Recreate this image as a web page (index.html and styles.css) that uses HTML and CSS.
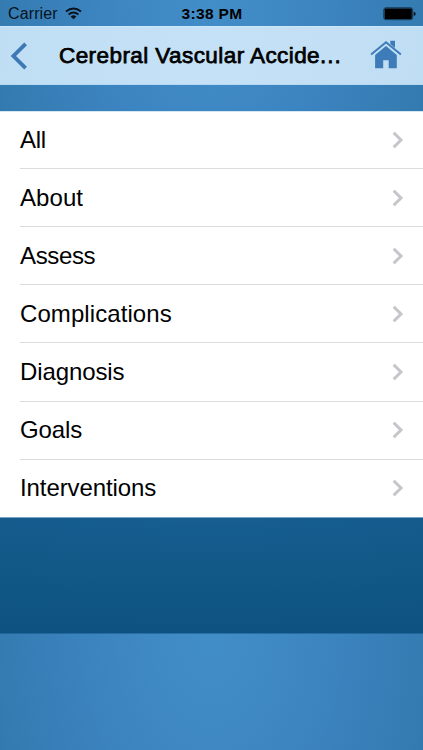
FILE: index.html
```html
<!DOCTYPE html>
<html lang="en">
<head>
<meta charset="utf-8">
<title>Cerebral Vascular Accident</title>
<link rel="stylesheet" href="styles.css">
</head>
<body>
<div class="screen">
  <header class="status">
    <div class="carrier"><span class="carrier-name">Carrier</span>
      <svg class="wifi" width="17" height="13" viewBox="0 0 17 13" fill="none" stroke="#08131d" stroke-width="1.9">
        <path d="M1 4.6Q8.5-1.7 16 4.6M3.6 7.5Q8.5 3.5 13.4 7.5"/><path d="M5.6 9.4Q8.5 7 11.4 9.4L8.5 12.2Z" fill="#08131d" stroke="none"/>
      </svg>
    </div>
    <span class="time">3:38 PM</span>
    <svg class="battery" width="33" height="14" viewBox="0 0 33 14">
      <rect x=".8" y=".8" width="28.8" height="11.9" rx="2" fill="none" stroke="#12344f" stroke-width="1"/>
      <rect x="1.6" y="1.6" width="27.2" height="10.3" rx="1" fill="#000"/>
      <path d="M30.7 4.7q2 .3 2 2.1t-2 2.1z" fill="#08131d"/>
    </svg>
  </header>
  <nav class="navbar">
    <svg class="back" width="18" height="28" viewBox="0 0 18 28" fill="none" stroke="#3b78b4" stroke-width="3.8"><path d="M15.6 1.8L3.4 14L15.6 26.2"/></svg>
    <h1 class="title">Cerebral Vascular Accide<span class="dots">...</span></h1>
    <svg class="home" width="32" height="30" viewBox="0 0 32 30">
      <path d="M16 6L26.8 15V28.2H18.7V20.2H13.2V28.2H5.1V15Z" fill="#3e7cb9"/>
      <path d="M20.3.8H25V8L20.3 4.1Z" fill="#3e7cb9"/>
      <path d="M1.1 14.5L16 2.2L30.9 14.5" fill="none" stroke="#3e7cb9" stroke-width="2"/>
    </svg>
  </nav>
  <ul class="list">
    <li class="row"><span class="label tight">All</span><svg class="chevron" viewBox="0 0 12 18"><path d="M1.7 1.7L9 9L1.7 16.3"/></svg></li>
    <li class="row"><span class="label">About</span><svg class="chevron" viewBox="0 0 12 18"><path d="M1.7 1.7L9 9L1.7 16.3"/></svg></li>
    <li class="row"><span class="label tight">Assess</span><svg class="chevron" viewBox="0 0 12 18"><path d="M1.7 1.7L9 9L1.7 16.3"/></svg></li>
    <li class="row"><span class="label">Complications</span><svg class="chevron" viewBox="0 0 12 18"><path d="M1.7 1.7L9 9L1.7 16.3"/></svg></li>
    <li class="row"><span class="label snug">Diagnosis</span><svg class="chevron" viewBox="0 0 12 18"><path d="M1.7 1.7L9 9L1.7 16.3"/></svg></li>
    <li class="row"><span class="label snug">Goals</span><svg class="chevron" viewBox="0 0 12 18"><path d="M1.7 1.7L9 9L1.7 16.3"/></svg></li>
    <li class="row"><span class="label snug">Interventions</span><svg class="chevron" viewBox="0 0 12 18"><path d="M1.7 1.7L9 9L1.7 16.3"/></svg></li>
  </ul>
</div>
</body>
</html>
```

FILE: styles.css
```css
* { box-sizing: border-box; }
body {
  margin: 0;
  font-family: "Liberation Sans", Arial, sans-serif;
  color: #000;
}
.screen {
  height: 750px;
  overflow: hidden;
  background:
    radial-gradient(ellipse 900px 160px at 50% 500px, #195f94, #115886 50%, #0c4f7f) 0 0 / 423px 633.5px no-repeat,
    radial-gradient(ellipse 430px 633px at 50% 0, #428ec8 0%, #3c84c0 27%, #347bb1 50%, #1b6196 90%) 0 633px / 423px 633px no-repeat;
}
.status {
  display: grid;
  grid-template-columns: 1fr auto 1fr;
  align-items: center;
  height: 26px;
  padding: 1px 7px 0 8px;
}
.status, .navbar { position: relative; }
.screen::before {
  content: "";
  display: block;
  height: 111px;
  margin-bottom: -111px;
  background: radial-gradient(ellipse 430px 633px at 50% 0, #428ec8 0%, #3c84c0 27%, #347bb1 50%, #1b6196 90%);
}
.carrier {
  display: flex;
  align-items: center;
  gap: 7px;
  color: #08131d;
}
.carrier-name {
  font-size: 16px;
  letter-spacing: .12px;
  line-height: 26px;
}
.wifi { margin-top: -1px; }
.time {
  font-size: 15.5px;
  font-weight: 700;
  letter-spacing: .35px;
}
.battery { justify-self: end; }
.navbar {
  display: flex;
  align-items: center;
  height: 59px;
  padding: 0 21px 0 10px;
  background: linear-gradient(100deg, #bfdef4, #c5e1f7 50%, #c0def3);
  border-top: 1px solid #cde7f9;
  border-bottom: 1px solid #b6d8f0;
}
.title {
  width: 284px;
  margin: 0 auto 0 31px;
  font-size: 22.5px;
  font-weight: 400;
  line-height: 30px;
  letter-spacing: .42px;
  white-space: nowrap;
  -webkit-text-stroke: .75px #000;
}
.dots { letter-spacing: 1px; }
.home { margin-bottom: 2px; }
.list {
  position: relative;
  margin: 26px 0 0;
  padding: 0;
  list-style: none;
  background: #fff;
  border-top: 1px solid #d5e6f3;
  border-bottom: 1px solid #7ba3bf;
}
.row {
  display: flex;
  align-items: center;
  justify-content: space-between;
  height: 58.1px;
  margin-left: 20px;
  padding-right: 19px;
  border-bottom: 1px solid #dcdcde;
}
.row:first-child { height: 57.2px; }
.row:last-child { border-bottom: 0; height: 57.4px; }
.label {
  font-size: 24px;
  line-height: 30px;
  letter-spacing: .08px;
}
.tight { letter-spacing: -.35px; }
.snug { letter-spacing: -.1px; }
.chevron {
  width: 12px;
  height: 18px;
  fill: none;
  stroke: #c5c5ca;
  stroke-width: 3;
}
```
